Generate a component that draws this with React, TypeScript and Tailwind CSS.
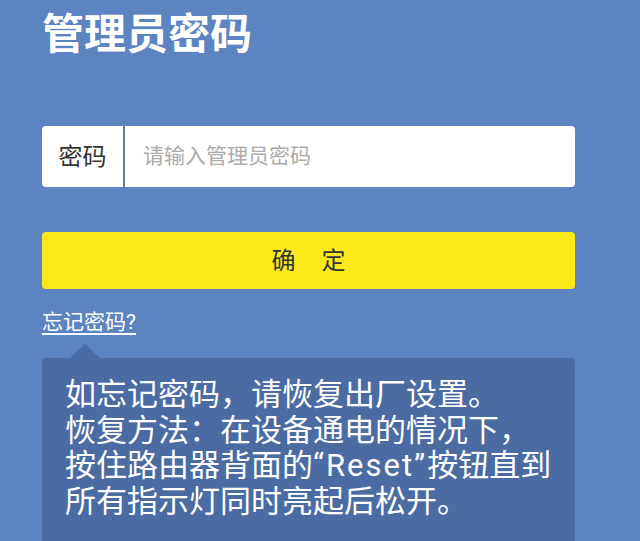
export default function App() {
  return (
    <div
      className="h-[541px] w-[640px] overflow-hidden bg-[#5c84c0] text-white"
      style={{ fontFamily: 'Roboto, "Noto Sans CJK SC", sans-serif' }}
    >
      <div className="w-[533px] ml-[42px]">
        <h1 className="pt-[10px] text-[42px] font-bold leading-[50px]">管理员密码</h1>

        <div className="mt-[66px] flex h-[61px] overflow-hidden rounded-[4px] bg-white">
          <div className="flex w-[81px] shrink-0 items-center justify-center text-[24px] text-[#333]">密码</div>
          <div className="w-[2px] bg-[#6b7a94]" />
          <div className="flex grow items-center pl-[18px] text-[21px] text-[#ababab]">请输入管理员密码</div>
        </div>

        <button
          type="button"
          className="mt-[45px] flex h-[57px] w-full items-center justify-center gap-[26px] rounded-[4px] bg-[#fce91c] text-[24px] text-[#333]"
        >
          <span>确</span>
          <span>定</span>
        </button>

        <div className="mt-[20px] text-[21px] leading-[26px]">
          <span className="underline decoration-[1.5px] underline-offset-[4px]">忘记密码?</span>
        </div>

        <div className="mt-[9px] ml-[28px] h-0 w-0 border-x-[15px] border-b-[14px] border-x-transparent border-b-[#4a6ca3]" />
        <div className="h-[200px] rounded-[4px] bg-[#4a6ca3] px-[23px] pt-[19px] text-[31px] leading-[35.7px]">
          <p>如忘记密码，请恢复出厂设置。</p>
          <p>恢复方法：在设备通电的情况下，</p>
          <p>
            按住路由器背面的<span className="tracking-[2px]">“Reset”</span>按钮直到
          </p>
          <p>所有指示灯同时亮起后松开。</p>
        </div>
      </div>
    </div>
  );
}
